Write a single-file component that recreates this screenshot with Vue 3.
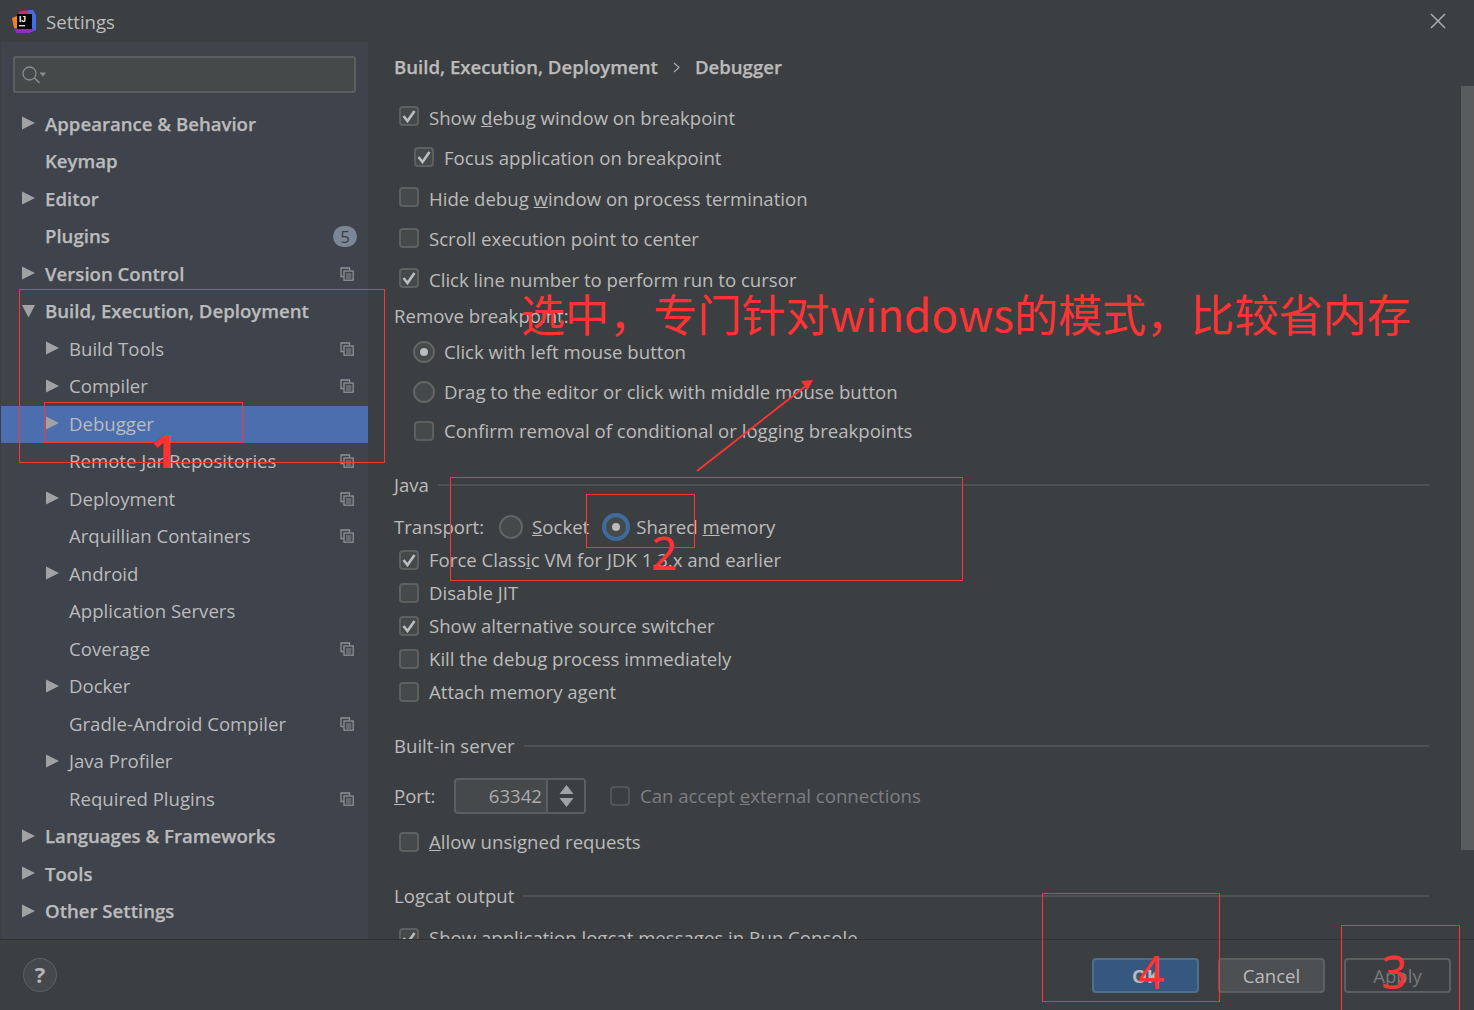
<script setup>
const tree = [
  { t: 'Appearance & Behavior', l: 0, a: 'r' },
  { t: 'Keymap', l: 0 },
  { t: 'Editor', l: 0, a: 'r' },
  { t: 'Plugins', l: 0, badge: '5' },
  { t: 'Version Control', l: 0, a: 'r', p: 1 },
  { t: 'Build, Execution, Deployment', l: 0, a: 'd' },
  { t: 'Build Tools', l: 1, a: 'r', p: 1 },
  { t: 'Compiler', l: 1, a: 'r', p: 1 },
  { t: 'Debugger', l: 1, a: 'r', sel: 1 },
  { t: 'Remote Jar Repositories', l: 1, p: 1 },
  { t: 'Deployment', l: 1, a: 'r', p: 1 },
  { t: 'Arquillian Containers', l: 1, p: 1 },
  { t: 'Android', l: 1, a: 'r' },
  { t: 'Application Servers', l: 1 },
  { t: 'Coverage', l: 1, p: 1 },
  { t: 'Docker', l: 1, a: 'r' },
  { t: 'Gradle-Android Compiler', l: 1, p: 1 },
  { t: 'Java Profiler', l: 1, a: 'r' },
  { t: 'Required Plugins', l: 1, p: 1 },
  { t: 'Languages & Frameworks', l: 0, a: 'r' },
  { t: 'Tools', l: 0, a: 'r' },
  { t: 'Other Settings', l: 0, a: 'r' }
]

const items = [
  { k: 'check', c: 'h40', on: 1, pre: 'Show ', u: 'd', post: 'ebug window on breakpoint' },
  { k: 'check', c: 'h40 indent', on: 1, pre: 'Focus application on breakpoint' },
  { k: 'check', c: 'h40', pre: 'Hide debug ', u: 'w', post: 'indow on process termination' },
  { k: 'check', c: 'h40', pre: 'Scroll execution point to center' },
  { k: 'check', c: 'h40', on: 1, pre: 'Click line number to perform run to cursor' },
  { k: 'plain', c: 'lbl', pre: 'Remove breakpoint:' },
  { k: 'radio', c: 'h39 indent', on: 1, pre: 'Click with left mouse button' },
  { k: 'radio', c: 'h39 indent', pre: 'Drag to the editor or click with middle mouse button' },
  { k: 'check', c: 'h39 indent', pre: 'Confirm removal of conditional or logging breakpoints' },
  { k: 'title', c: 't-java', pre: 'Java' },
  { k: 'transport', c: 'h33 m-trans' },
  { k: 'check', c: 'h33', on: 1, pre: 'Force Class', u: 'i', post: 'c VM for JDK 1.3.x and earlier' },
  { k: 'check', c: 'h33', pre: 'Disable JIT' },
  { k: 'check', c: 'h33', on: 1, pre: 'Show alternative source switcher' },
  { k: 'check', c: 'h33', pre: 'Kill the debug process immediately' },
  { k: 'check', c: 'h33', pre: 'Attach memory agent' },
  { k: 'title', c: 't-next', pre: 'Built-in server' },
  { k: 'port', c: 'portrow' },
  { k: 'check', c: 'h33 m-allow', u: 'A', post: 'llow unsigned requests' },
  { k: 'title', c: 't-next', pre: 'Logcat output' },
  { k: 'check', c: 'h33 m-trans', on: 1, pre: 'Show application logcat messages in Run Console' }
]

const boxes = ['b1', 'b2', 'b3', 'b4', 'b5', 'b6']
const digits = [
  { c: 'd1', t: '1' },
  { c: 'd2', t: '2' },
  { c: 'd3', t: '3' },
  { c: 'd4', t: '4' }
]
</script>

<template>
  <div class="win">
    <header class="head">
      <svg class="logo" width="26" height="26" viewBox="0 0 26 26">
        <path d="M3 13 L9 3 L19 2 L19 8 L6 22 Z" fill="#e0206e" />
        <path d="M17 2 L22 2 L25 7 L25 22 L18 25 Z" fill="#3f6fe8" />
        <path d="M3 19 L5 25 L18 25 L24 21 L8 18 Z" fill="#8b2fc9" />
        <path d="M1 10 L6 8 L7 20 L3 20 Z" fill="#f58220" />
        <rect x="6" y="6" width="15" height="15" fill="#000" />
        <text x="8" y="14" class="logotx">IJ</text>
        <rect x="8" y="17" width="6" height="1.4" fill="#ddd" />
      </svg>
      <span class="title">Settings</span>
      <svg class="close" width="16" height="16" viewBox="0 0 16 16">
        <path d="M1 1 L15 15 M15 1 L1 15" stroke="#a9abad" stroke-width="1.5" fill="none" />
      </svg>
    </header>

    <div class="body">
      <aside class="side">
        <div class="search">
          <svg width="26" height="20" viewBox="0 0 26 20">
            <circle cx="7.5" cy="8.5" r="6.5" fill="none" stroke="#8b8e90" stroke-width="1.3" />
            <path d="M12.5 13 L17.5 18" stroke="#8b8e90" stroke-width="1.6" />
            <path d="M17.5 7.5 L24 7.5 L20.8 11.5 Z" fill="#8b8e90" />
          </svg>
        </div>
        <div class="tree">
          <div
            v-for="n in tree"
            :key="n.t"
            class="node"
            :class="[n.l ? 'lv1' : 'lv0', n.sel ? 'sel' : '']"
          >
            <svg v-if="n.a" class="arrow" width="13" height="14" viewBox="0 0 13 14">
              <path v-if="n.a === 'r'" d="M0 0.5 L13 7 L0 13.5 Z" fill="#a0a2a4" />
              <path v-else d="M0 1 L13 1 L6.5 13.5 Z" fill="#a0a2a4" />
            </svg>
            <span class="ntext">{{ n.t }}</span>
            <span v-if="n.badge" class="badge">{{ n.badge }}</span>
            <svg v-if="n.p" class="proj" width="14" height="14" viewBox="0 0 14 14">
              <path d="M3.5 9.5 H1 V1 H9.5 V3.5" fill="none" stroke="#8f9295" stroke-width="1.3" />
              <rect x="4" y="4" width="9.2" height="9.2" fill="none" stroke="#8f9295" stroke-width="1.3" />
              <path d="M6 7 H11.3 M6 9 H11.3 M6 11 H11.3" stroke="#8f9295" stroke-width="1" />
            </svg>
          </div>
        </div>
      </aside>

      <main class="main">
        <div class="crumb">
          <span>Build, Execution, Deployment</span>
          <svg width="7" height="11" viewBox="0 0 7 11">
            <path d="M1 1 L6 5.5 L1 10" fill="none" stroke="#a9abad" stroke-width="1.2" />
          </svg>
          <span>Debugger</span>
        </div>
        <div class="content">
          <template v-for="(it, i) in items" :key="i">
            <div v-if="it.k === 'check'" class="row" :class="it.c">
              <span class="cb">
                <svg v-if="it.on" width="16" height="14" viewBox="0 0 16 14">
                  <path d="M2.5 7 L6.5 12 L13.5 2" fill="none" stroke="#bdbdbd" stroke-width="2.6" />
                </svg>
              </span>
              <span class="lab">{{ it.pre }}<u v-if="it.u">{{ it.u }}</u>{{ it.post }}</span>
            </div>
            <div v-else-if="it.k === 'radio'" class="row" :class="it.c">
              <span class="rb"><i v-if="it.on"></i></span>
              <span class="lab">{{ it.pre }}</span>
            </div>
            <div v-else-if="it.k === 'plain'" class="row" :class="it.c">
              <span class="txt">{{ it.pre }}</span>
            </div>
            <div v-else-if="it.k === 'title'" class="row ttl" :class="it.c">
              <span class="txt">{{ it.pre }}</span>
              <span class="rule"></span>
            </div>
            <div v-else-if="it.k === 'transport'" class="row trans" :class="it.c">
              <span class="txt">Transport:</span>
              <span class="rb small"></span>
              <span class="txt"><u>S</u>ocket</span>
              <span class="rbsel"><i></i></span>
              <span class="txt">Shared <u>m</u>emory</span>
            </div>
            <div v-else class="row" :class="it.c">
              <span class="txt portlab"><u>P</u>ort:</span>
              <span class="spin">
                <span class="val">63342</span>
                <span class="btns">
                  <svg width="15" height="24" viewBox="0 0 15 24">
                    <path d="M7.5 1 L14.5 10 H0.5 Z M7.5 23 L14.5 14 H0.5 Z" fill="#a0a2a4" />
                  </svg>
                </span>
              </span>
              <span class="cb off"></span>
              <span class="lab dim">Can accept <u>e</u>xternal connections</span>
            </div>
          </template>
        </div>
        <div class="sbar"></div>
      </main>
    </div>

    <footer class="foot">
      <span class="help">?</span>
      <span class="btns-r">
        <button class="btn ok">OK</button>
        <button class="btn cancel">Cancel</button>
        <button class="btn apply">Apply</button>
      </span>
    </footer>

    <div class="note">
      <span v-for="b in boxes" :key="b" class="box" :class="b"></span>
      <span v-for="d in digits" :key="d.c" class="digit" :class="d.c">{{ d.t }}</span>
      <span class="bigtext">选中，专门针对windows的模式，比较省内存</span>
      <svg class="arr" width="124" height="110" viewBox="0 0 124 110">
        <path d="M3 101 L113 15" stroke="#ff3333" stroke-width="1.8" fill="none" />
        <path d="M119 10 L107 11 L113.5 20 Z" fill="#ff3333" />
      </svg>
    </div>
  </div>
</template>

<style>
html, body { margin: 0; background: #3c3f41; }
</style>

<style scoped>
.win {
  position: relative;
  width: 1474px;
  height: 1010px;
  overflow: hidden;
  display: flex;
  flex-direction: column;
  background: #3c3f41;
  color: #bbbbbb;
  font-family: "Open Sans", "Noto Sans", "Noto Sans CJK SC", sans-serif;
  font-size: 18.6px;
}
.head {
  height: 42px;
  flex: none;
  display: flex;
  align-items: center;
  padding-left: 11px;
  padding-right: 28px;
}
.logo { margin-right: 9px; }
.logotx { font: 700 8.5px "Liberation Sans", sans-serif; fill: #fff; }
.title { flex: 1; margin-top: 1px; }
.body { flex: 1; display: flex; min-height: 0; }
.side {
  width: 367px;
  margin-left: 1px;
  flex: none;
  background: #3e434c;
  display: flex;
  flex-direction: column;
}
.search {
  margin: 14px 12px 0;
  height: 37px;
  box-sizing: border-box;
  border: 2px solid #5b5f62;
  border-radius: 3px;
  background: #45494a;
  display: flex;
  align-items: center;
  padding-left: 7px;
}
.tree { margin-top: 12.75px; }
.node {
  height: 37.5px;
  position: relative;
  display: flex;
  align-items: center;
  padding-right: 14px;
}
.lv0 { padding-left: 44px; font-weight: 600; -webkit-text-stroke: 0.25px #bbbbbb; }
.lv1 { padding-left: 68px; }
.arrow { position: absolute; top: 10.5px; }
.lv0 .arrow { left: 21px; }
.lv1 .arrow { left: 45px; }
.sel { background: #4b6eaf; }
.ntext { flex: 1; margin-bottom: 3px; }
.badge {
  width: 24px;
  height: 21px;
  border-radius: 11px;
  background: #7b8796;
  color: #3c3f41;
  font-size: 17px;
  font-weight: 400;
  line-height: 21px;
  text-align: center;
  margin-right: -3px;
  margin-bottom: 1px;
  -webkit-text-stroke: 0;
}
.proj { flex: none; margin-bottom: 2px; }
.main { flex: 1; min-width: 0; position: relative; display: flex; flex-direction: column; }
.crumb {
  height: 50px;
  flex: none;
  display: flex;
  align-items: center;
  gap: 15px;
  padding-left: 26px;
  font-weight: 600;
  -webkit-text-stroke: 0.25px #bbbbbb;
}
.crumb span { margin-bottom: 2px; }
.content {
  flex: 1;
  min-height: 0;
  overflow: hidden;
  padding: 5.5px 45px 0 26px;
}
.row { display: flex; align-items: center; white-space: nowrap; }
.lab, .txt { margin-bottom: 1.5px; }
.h40 { height: 40.5px; }
.h40 .cb { margin-bottom: 3px; }
.h39 { height: 39.5px; }
.h33 { height: 33px; }
.lbl { height: 32.5px; }
.indent { padding-left: 15px; }
.indent .rb { margin-left: 4px; margin-right: 9px; }
.cb {
  width: 20px;
  height: 20px;
  box-sizing: border-box;
  flex: none;
  margin-left: 5px;
  margin-right: 10px;
  border: 2px solid #5e6060;
  border-radius: 4px;
  background: #45494a;
  display: flex;
  align-items: center;
  justify-content: center;
}
.cb.off { background: transparent; border-color: #535557; margin-left: 24px; }
.rb {
  width: 22px;
  height: 22px;
  box-sizing: border-box;
  flex: none;
  margin-right: 10px;
  border: 2px solid #646464;
  border-radius: 50%;
  background: #45494a;
  display: flex;
  align-items: center;
  justify-content: center;
}
.rb i { width: 8px; height: 8px; border-radius: 50%; background: #bbbbbb; }
.rb.small { width: 24px; height: 24px; margin-left: 15px; margin-right: 9px; }
.rbsel {
  width: 28px;
  height: 28px;
  box-sizing: border-box;
  flex: none;
  margin-left: 13px;
  margin-right: 6px;
  border: 4px solid #3e6b99;
  border-radius: 50%;
  background: #45494a;
  display: flex;
  align-items: center;
  justify-content: center;
}
.rbsel i { width: 8px; height: 8px; border-radius: 50%; background: #bbbbbb; }
.dim { color: #7d7f81; }
.ttl { height: 24px; gap: 9px; }
.t-java { margin-top: 22px; }
.t-next { margin-top: 25.5px; }
.m-trans { margin-top: 13.5px; }
.m-allow { margin-top: 11.5px; }
.rule { flex: 1; height: 2px; background: #4f5254; }
.portrow { height: 36px; margin-top: 20px; }
.portlab { width: 41px; }
.spin {
  margin-left: 19px;
  width: 132px;
  height: 36px;
  box-sizing: border-box;
  border: 2px solid #5b5f62;
  border-radius: 4px;
  display: flex;
  background: #45494a;
}
.val { width: 90px; box-sizing: border-box; padding-right: 4px; line-height: 32px; text-align: right; color: #a9abad; }
.btns {
  flex: 1;
  background: #3c3f41;
  border-left: 2px solid #5b5f62;
  display: flex;
  align-items: center;
  justify-content: center;
}
.sbar {
  position: absolute;
  right: 0;
  top: 44px;
  width: 13px;
  height: 764px;
  background: #595b5d;
}
.foot {
  height: 71px;
  flex: none;
  box-sizing: border-box;
  border-top: 1px solid #2f3133;
  display: flex;
  align-items: center;
  padding: 0 23px;
  background: #3c3f41;
}
.help {
  width: 34px;
  height: 34px;
  box-sizing: border-box;
  border: 1px solid #5e6163;
  border-radius: 50%;
  background: #46494b;
  text-align: center;
  line-height: 30px;
  font-size: 22px;
  font-weight: 700;
  color: #b4b6b8;
}
.btns-r { margin-left: auto; display: flex; gap: 19px; }
.btn {
  width: 107px;
  height: 35px;
  padding: 0;
  box-sizing: border-box;
  border-radius: 4px;
  border: 2px solid #5e6060;
  font: inherit;
  color: #bbbbbb;
  background: #4c5052;
}
.ok { background: #365880; border-color: #4c708c; font-weight: 700; }
.apply { background: transparent; color: #77797b; }
.note { position: absolute; inset: 0; pointer-events: none; }
.box { position: absolute; border: 1px solid #ff3333; box-sizing: border-box; }
.b1 { left: 19px; top: 289px; width: 366px; height: 174px; }
.b2 { left: 44px; top: 402px; width: 199px; height: 41px; }
.b3 { left: 450px; top: 477px; width: 513px; height: 104px; }
.b4 { left: 586px; top: 494px; width: 109px; height: 54px; }
.b5 { left: 1042px; top: 893px; width: 178px; height: 109px; }
.b6 { left: 1341px; top: 925px; width: 119px; height: 100px; }
.digit {
  position: absolute;
  color: #ff3333;
  font-size: 46px;
  line-height: 46px;
  font-family: "Noto Sans", sans-serif;
}
.d1 { left: 151px; top: 427px; font-weight: 700; }
.d2 { left: 651px; top: 529px; }
.d3 { left: 1381px; top: 948px; }
.d4 { left: 1138px; top: 948px; }
.bigtext {
  position: absolute;
  left: 521px;
  top: 282px;
  color: #ff3333;
  font-size: 44.1px;
  line-height: 62px;
  white-space: nowrap;
  font-family: "Noto Sans CJK SC", sans-serif;
}
.arr { position: absolute; left: 694px; top: 370px; }
</style>
